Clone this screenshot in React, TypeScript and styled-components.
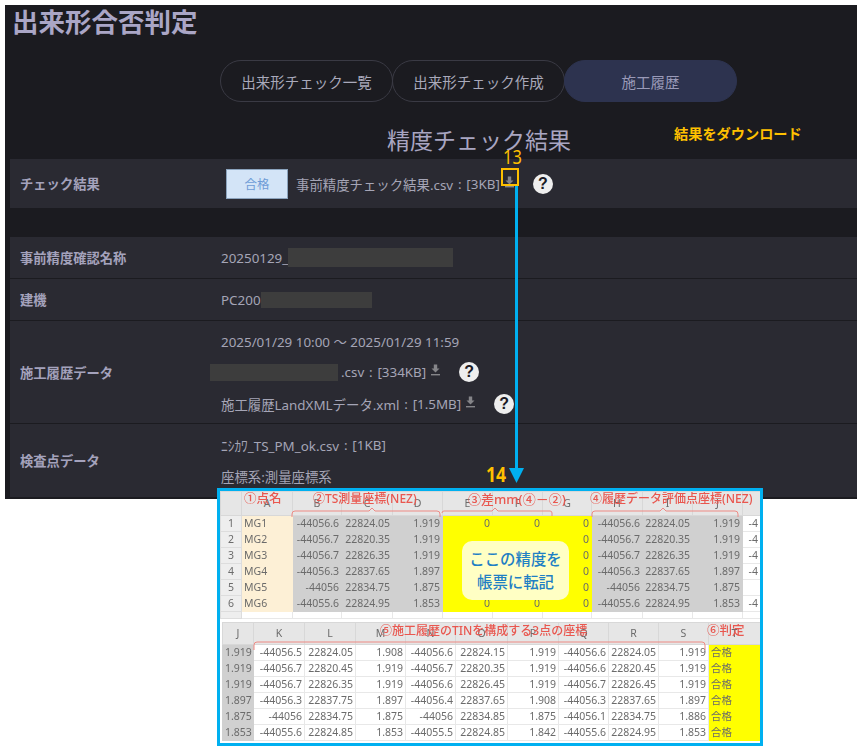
import React from 'react'
import styled, { createGlobalStyle } from 'styled-components'

const GlobalStyle = createGlobalStyle`
  html, body {
    margin: 0;
    padding: 0;
    background: #fff;
    font-family: "Noto Sans", "Noto Sans CJK JP", sans-serif;
  }
`

const Page = styled.div`
  position: relative;
  width: 857px;
  height: 752px;
  overflow: hidden;
  padding: 5px 0 0 5px;
  box-sizing: border-box;
`

const Panel = styled.div`
  background: #1b1b20;
  height: 494px;
  padding-left: 5px;
  box-sizing: border-box;
  overflow: hidden;
`

const Title = styled.h1`
  margin: 0 0 0 2px;
  height: 34px;
  font-size: 26.5px;
  line-height: 34px;
  font-weight: 700;
  color: #aaa6c6;
`

const Tabs = styled.div`
  display: flex;
  margin: 21px 0 0 210px;
`

const Tab = styled.div<{ $active?: boolean }>`
  width: 173px;
  height: 42px;
  box-sizing: border-box;
  border-radius: 21px;
  margin-right: -1px;
  display: flex;
  align-items: center;
  justify-content: center;
  font-size: 14.5px;
  color: ${p => (p.$active ? '#9a9ab8' : '#a9a9ba')};
  background: ${p => (p.$active ? '#2d334f' : 'transparent')};
  border: 1px solid ${p => (p.$active ? '#2d334f' : '#3a3a44')};
`

const Heading = styled.h2`
  margin: 21px 0 2px 377px;
  height: 34px;
  font-size: 23px;
  line-height: 34px;
  font-weight: 400;
  color: #a9a6c2;
  white-space: nowrap;
`

const Rows = styled.div<{ $top?: number }>`
  display: flex;
  flex-direction: column;
  gap: 1px;
  margin-top: ${p => p.$top ?? 0}px;
`

const Row = styled.div<{ $height: number }>`
  display: grid;
  grid-template-columns: 201px 1fr;
  align-items: center;
  height: ${p => p.$height}px;
  background: #2a2a32;
  padding-left: 10px;
`

const Label = styled.div`
  font-size: 13.3px;
  font-weight: 700;
  color: #a4a2bc;
`

const Value = styled.div<{ $gap?: number }>`
  display: flex;
  flex-direction: column;
  gap: ${p => p.$gap ?? 0}px;
  font-size: 13.4px;
  color: #a5a5b6;
`

const Line = styled.div`
  display: flex;
  align-items: center;
  height: 20px;
  white-space: nowrap;
`

const Sep = styled.span`
  margin: 0 4.8px;
`

const PassBadge = styled.div`
  width: 62px;
  height: 30px;
  margin: 0 8px 0 5px;
  box-sizing: border-box;
  display: flex;
  align-items: center;
  justify-content: center;
  background: #d3e4f7;
  border: 1px solid #8ba3bd;
  color: #6d9bd6;
  font-size: 12.5px;
`

const Mask = styled.span<{ $width: number; $height: number; $shift?: number }>`
  display: inline-block;
  flex: none;
  width: ${p => p.$width}px;
  height: ${p => p.$height}px;
  margin-left: ${p => p.$shift ?? 0}px;
  margin-right: 3px;
  background: #3d3d3d;
`

const HelpMark = styled.span<{ $left: number }>`
  flex: none;
  width: 20px;
  height: 20px;
  margin-left: ${p => p.$left}px;
  border-radius: 50%;
  background: #eeeeee;
  color: #1b1b24;
  font-family: "Liberation Sans", sans-serif;
  font-size: 16px;
  font-weight: 700;
  line-height: 20px;
  text-align: center;
`

const DownloadSvg = styled.svg`
  flex: none;
  margin-left: 4px;
  margin-top: -4px;
`

const DownloadIcon = () => (
  <DownloadSvg width="11" height="12" viewBox="0 0 11 12">
    <path d="M3.8 0.5h3.4v4h2.3L5.5 8.6 1.5 4.5h2.3z" fill="#858589" />
    <rect x="1" y="10" width="9" height="1.4" fill="#858589" />
  </DownloadSvg>
)

const Sheet = styled.div`
  width: 546px;
  height: 258px;
  margin: -11px 0 0 212px;
  position: relative;
  box-sizing: border-box;
  border: 3px solid #00b0f0;
  background: #fff;
  overflow: hidden;
`

const Grid = styled.table<{ $left: number }>`
  border-collapse: collapse;
  table-layout: fixed;
  margin-left: ${p => p.$left}px;
  font-family: "Noto Sans", "Noto Sans CJK JP", sans-serif;
  color: #6b6b6b;
  filter: blur(0.35px);
`

type Fill = 'head' | 'index' | 'beige' | 'gray' | 'yellow' | 'white'

const fills: Record<Fill, string> = {
  head: '#e6e6e6',
  index: '#eeeeee',
  beige: '#fdf0d6',
  gray: '#d0d0d0',
  yellow: '#ffff00',
  white: '#ffffff',
}

const lines: Record<Fill, string> = {
  head: '#d8d8d8',
  index: '#dddddd',
  beige: '#fdf0d6',
  gray: '#d0d0d0',
  yellow: '#ffff00',
  white: '#e8e8e8',
}

const Cell = styled.td<{ $fill: Fill; $align?: string; $height: number }>`
  height: ${p => p.$height}px;
  padding: 0 2px;
  box-sizing: border-box;
  overflow: hidden;
  white-space: nowrap;
  font-size: 10.5px;
  line-height: 1;
  background: ${p => fills[p.$fill]};
  text-align: ${p => p.$align ?? 'right'};
  border: 1px solid ${p => lines[p.$fill]};
`

const SpacerRow = styled.div`
  height: 3px;
`

const Note = styled.span<{ $left: number; $top: number; $size?: number }>`
  position: absolute;
  left: ${p => p.$left}px;
  top: ${p => p.$top}px;
  color: #e9574f;
  font-size: ${p => p.$size ?? 12}px;
  font-weight: 500;
  line-height: 16px;
  white-space: nowrap;
`

const Pill = styled.div`
  position: absolute;
  left: 242px;
  top: 50px;
  width: 107px;
  height: 59px;
  border-radius: 10px;
  background: #ffffc4;
  color: #1f80c4;
  font-size: 15.4px;
  font-weight: 500;
  line-height: 23px;
  text-align: center;
  display: flex;
  flex-direction: column;
  justify-content: center;
`

const BracketSvg = styled.svg`
  position: absolute;
  left: 0;
  top: 0;
  pointer-events: none;
`

const Callout = styled.span<{ $left: number; $top: number; $size: number; $scaleX?: number; $bold?: boolean }>`
  position: absolute;
  left: ${p => p.$left}px;
  top: ${p => p.$top}px;
  color: #ffc000;
  font-size: ${p => p.$size}px;
  font-weight: ${p => (p.$bold ? 700 : 400)};
  line-height: 1;
  white-space: nowrap;
  transform-origin: left top;
  transform: scaleX(${p => p.$scaleX ?? 1});
`

const Marker = styled.div`
  position: absolute;
  left: 501px;
  top: 168px;
  width: 18px;
  height: 18px;
  box-sizing: border-box;
  border: 2px solid #ffc000;
`

const ArrowSvg = styled.svg`
  position: absolute;
  left: 505px;
  top: 186px;
`

const col1 = [21, 51, 49, 51, 50, 50, 50, 49, 51, 50, 50, 18]
const col2 = [31, 51, 51, 50, 50, 52, 51, 50, 50, 50, 52]

const head1 = ['', 'A', 'B', 'C', 'D', 'E', 'F', 'G', 'H', 'I', 'J', '']
const head2 = ['J', 'K', 'L', 'M', 'N', 'O', 'P', 'Q', 'R', 'S', 'T']

const fill1: Fill[] = ['index', 'beige', 'gray', 'gray', 'gray', 'yellow', 'yellow', 'yellow', 'gray', 'gray', 'gray', 'white']
const fill2: Fill[] = ['gray', 'white', 'white', 'white', 'white', 'white', 'white', 'white', 'white', 'white', 'yellow']

// E and F of rows 2-5 sit under the pill, so they are left empty
const data1 = [
  ['1', 'MG1', '-44056.6', '22824.05', '1.919', '0', '0', '0', '-44056.6', '22824.05', '1.919', '-4'],
  ['2', 'MG2', '-44056.7', '22820.35', '1.919', '', '', '0', '-44056.7', '22820.35', '1.919', '-4'],
  ['3', 'MG3', '-44056.7', '22826.35', '1.919', '', '', '0', '-44056.7', '22826.35', '1.919', '-4'],
  ['4', 'MG4', '-44056.3', '22837.65', '1.897', '', '', '0', '-44056.3', '22837.65', '1.897', '-4'],
  ['5', 'MG5', '-44056', '22834.75', '1.875', '', '', '0', '-44056', '22834.75', '1.875', ''],
  ['6', 'MG6', '-44055.6', '22824.95', '1.853', '0', '0', '0', '-44055.6', '22824.95', '1.853', '-4'],
]

const data2 = [
  ['1.919', '-44056.5', '22824.05', '1.908', '-44056.6', '22824.15', '1.919', '-44056.6', '22824.05', '1.919', '合格'],
  ['1.919', '-44056.7', '22820.45', '1.919', '-44056.7', '22820.35', '1.919', '-44056.6', '22820.45', '1.919', '合格'],
  ['1.919', '-44056.7', '22826.35', '1.919', '-44056.6', '22826.45', '1.919', '-44056.7', '22826.45', '1.919', '合格'],
  ['1.897', '-44056.3', '22837.75', '1.897', '-44056.4', '22837.65', '1.908', '-44056.3', '22837.65', '1.897', '合格'],
  ['1.875', '-44056', '22834.75', '1.875', '-44056', '22834.85', '1.875', '-44056.1', '22834.75', '1.886', '合格'],
  ['1.853', '-44055.6', '22824.85', '1.853', '-44055.5', '22824.85', '1.842', '-44055.6', '22824.95', '1.853', '合格'],
]

type SheetTableProps = {
  left: number
  widths: number[]
  head: string[]
  fill: Fill[]
  rows: string[][]
  headHeight: number
  rowHeight: number
  leftCols: number[]
  extraRow?: boolean
}

const SheetTable = ({ left, widths, head, fill, rows, headHeight, rowHeight, leftCols, extraRow }: SheetTableProps) => (
  <Grid $left={left} style={{ width: widths.reduce((a, b) => a + b, 0) }}>
    <colgroup>
      {widths.map((w, i) => (
        <col key={i} style={{ width: w }} />
      ))}
    </colgroup>
    <tbody>
      <tr>
        {head.map((h, i) => (
          <Cell key={i} $fill="head" $align="center" $height={headHeight}>
            {h}
          </Cell>
        ))}
      </tr>
      {rows.map((row, r) => (
        <tr key={r}>
          {row.map((v, i) => (
            <Cell key={i} $fill={fill[i]} $height={rowHeight} $align={leftCols.includes(i) ? 'left' : i === 0 && fill[0] === 'index' ? 'center' : 'right'}>
              {v}
            </Cell>
          ))}
        </tr>
      ))}
      {extraRow && (
        <tr>
          {head.map((_, i) => (
            <Cell key={i} $fill={i === 0 ? 'index' : 'white'} $height={7} />
          ))}
        </tr>
      )}
    </tbody>
  </Grid>
)

const App = () => (
  <Page lang="ja">
    <GlobalStyle />
    <Panel>
      <Title>出来形合否判定</Title>
      <Tabs>
        <Tab>出来形チェック一覧</Tab>
        <Tab>出来形チェック作成</Tab>
        <Tab $active>施工履歴</Tab>
      </Tabs>
      <Heading>精度チェック結果</Heading>
      <Rows>
        <Row $height={49}>
          <Label>チェック結果</Label>
          <Value>
            <Line>
              <PassBadge>合格</PassBadge>
              事前精度チェック結果.csv<Sep>:</Sep>[3KB]
              <DownloadIcon />
              <HelpMark $left={18}>?</HelpMark>
            </Line>
          </Value>
        </Row>
      </Rows>
      <Rows $top={29}>
        <Row $height={41}>
          <Label>事前精度確認名称</Label>
          <Value>
            <Line>
              20250129_
              <Mask $width={165} $height={19} />
            </Line>
          </Value>
        </Row>
        <Row $height={41}>
          <Label>建機</Label>
          <Value>
            <Line>
              PC200
              <Mask $width={111} $height={16} />
            </Line>
          </Value>
        </Row>
        <Row $height={102}>
          <Label>施工履歴データ</Label>
          <Value $gap={11.5}>
            <Line>2025/01/29 10:00 ～ 2025/01/29 11:59</Line>
            <Line>
              <Mask $width={128} $height={17} $shift={-11} />
              .csv<Sep>:</Sep>[334KB]
              <DownloadIcon />
              <HelpMark $left={18}>?</HelpMark>
            </Line>
            <Line>
              施工履歴LandXMLデータ.xml<Sep>:</Sep>[1.5MB]
              <DownloadIcon />
              <HelpMark $left={18}>?</HelpMark>
            </Line>
          </Value>
        </Row>
        <Row $height={73}>
          <Label>検査点データ</Label>
          <Value $gap={11}>
            <Line>ﾆｼｶﾜ_TS_PM_ok.csv<Sep>:</Sep>[1KB]</Line>
            <Line>座標系:測量座標系</Line>
          </Value>
        </Row>
      </Rows>
    </Panel>

    <Sheet>
      <SheetTable
        left={0}
        widths={col1}
        head={head1}
        fill={fill1}
        rows={data1}
        headHeight={24}
        rowHeight={16}
        leftCols={[1]}
        extraRow
      />
      <SpacerRow />
      <SheetTable
        left={2}
        widths={col2}
        head={head2}
        fill={fill2}
        rows={data2}
        headHeight={22}
        rowHeight={16}
        leftCols={[10]}
      />
      <Note $left={24} $top={0} $size={12.5}>①点名</Note>
      <Note $left={93} $top={0}>②TS測量座標(NEZ)</Note>
      <Note $left={248} $top={0} $size={13}>③差mm(④－②)</Note>
      <Note $left={370} $top={0} $size={12}>④履歴データ評価点座標(NEZ)</Note>
      <Note $left={160} $top={132}>⑤施工履歴のTINを構成する3点の座標</Note>
      <Note $left={487} $top={132} $size={12.5}>⑥判定</Note>
      <BracketSvg width="540" height="252" viewBox="0 0 540 252" fill="none" stroke="#ee8a84" strokeWidth="1">
        <path d="M72 26v-3q0-3 3-3h74l3-3 3 3h62q3 0 3 3v3" />
        <path d="M222 22q0-2 2-2h48l3-3 3 3h52q2 0 2 2v3" />
        <path d="M372 26v-3q0-3 3-3h65l3-3 3 3h69q3 0 3 3v3" />
        <path d="M34 159v-5q0-3 3-3h445q3 0 3 3v5" />
      </BracketSvg>
      <Pill>
        <span>ここの精度を</span>
        <span>帳票に転記</span>
      </Pill>
    </Sheet>

    <Callout $left={674} $top={127} $size={14.2} $bold>
      結果をダウンロード
    </Callout>
    <Callout $left={503} $top={147} $size={20} $scaleX={0.82}>
      13
    </Callout>
    <Callout $left={486} $top={462} $size={22} $scaleX={0.8} $bold>
      14
    </Callout>
    <Marker />
    <ArrowSvg width="20" height="298" viewBox="0 0 20 298">
      <rect x="10" y="0" width="3" height="283" fill="#00b0f0" />
      <path d="M4 282h15l-7.5 15z" fill="#00b0f0" />
    </ArrowSvg>
  </Page>
)

export default App
